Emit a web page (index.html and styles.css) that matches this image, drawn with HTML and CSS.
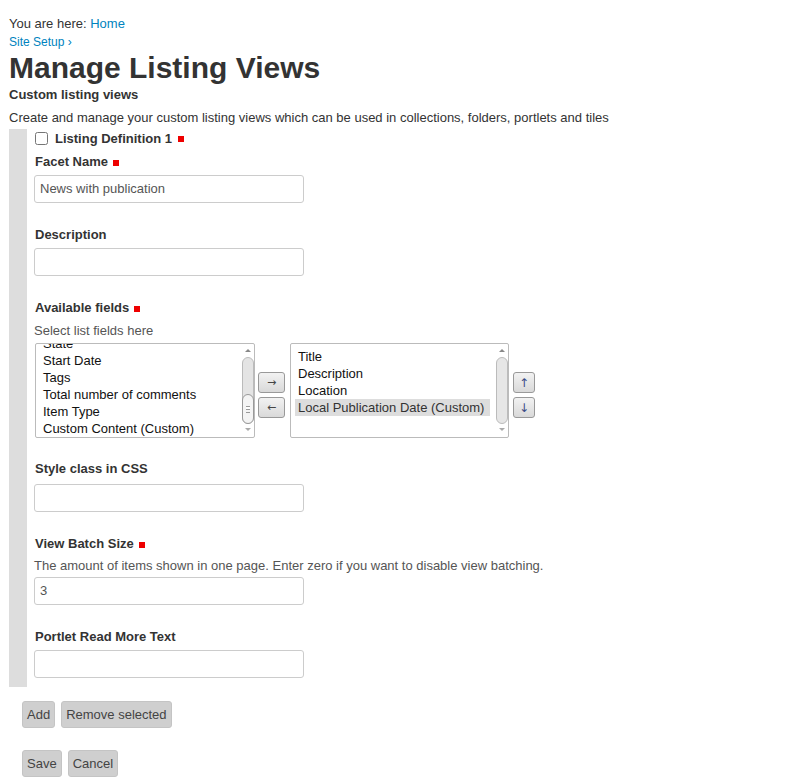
FILE: index.html
```html
<!DOCTYPE html>
<html>
<head>
<meta charset="utf-8">
<link rel="stylesheet" href="styles.css">
</head>
<body>
<div class="page">
  <div class="here">You are here: <a href="#">Home</a></div>
  <div class="crumbs"><a href="#">Site Setup ›</a></div>
  <h1>Manage Listing Views</h1>
  <h2>Custom listing views</h2>
  <p class="desc">Create and manage your custom listing views which can be used in collections, folders, portlets and tiles</p>

  <div class="fieldset">
    <div class="legend"><input type="checkbox" class="check"><span>Listing Definition 1</span><i class="req"></i></div>

    <div class="field f-first">
      <label class="lbl">Facet Name<i class="req"></i></label>
      <div class="input">News with publication</div>
    </div>

    <div class="field">
      <label class="lbl">Description</label>
      <div class="input"></div>
    </div>

    <div class="field">
      <label class="lbl">Available fields<i class="req"></i></label>
      <div class="help">Select list fields here</div>
      <div class="picker">
        <div class="list list-left">
          <div class="items shifted">
            <div class="item">State</div>
            <div class="item">Start Date</div>
            <div class="item">Tags</div>
            <div class="item">Total number of comments</div>
            <div class="item">Item Type</div>
            <div class="item">Custom Content (Custom)</div>
          </div>
          <div class="sb">
            <span class="sb-up"></span>
            <div class="sb-track"><div class="sb-thumb small"><span class="grip"></span></div></div>
            <span class="sb-down"></span>
          </div>
        </div>
        <div class="btncol">
          <span class="abtn wide">&#8594;</span>
          <span class="abtn wide">&#8592;</span>
        </div>
        <div class="list list-right">
          <div class="items">
            <div class="item">Title</div>
            <div class="item">Description</div>
            <div class="item">Location</div>
            <div class="item sel">Local Publication Date (Custom)</div>
          </div>
          <div class="sb">
            <span class="sb-up"></span>
            <div class="sb-track full"></div>
            <span class="sb-down"></span>
          </div>
        </div>
        <div class="btncol right">
          <span class="abtn blue">&#8593;</span>
          <span class="abtn blue">&#8595;</span>
        </div>
      </div>
    </div>

    <div class="field f-css">
      <label class="lbl">Style class in CSS</label>
      <div class="input"></div>
    </div>

    <div class="field f-batch">
      <label class="lbl">View Batch Size<i class="req"></i></label>
      <div class="help">The amount of items shown in one page. Enter zero if you want to disable view batching.</div>
      <div class="input tight">3</div>
    </div>

    <div class="field">
      <label class="lbl">Portlet Read More Text</label>
      <div class="input"></div>
    </div>
  </div>

  <div class="actions first">
    <button class="btn">Add</button>
    <button class="btn">Remove selected</button>
  </div>
  <div class="actions">
    <button class="btn">Save</button>
    <button class="btn">Cancel</button>
  </div>
</div>
</body>
</html>
```

FILE: styles.css
```css
* { box-sizing: border-box; }
html, body { margin: 0; padding: 0; background: #fff; }
body {
  font-family: "Liberation Sans", Arial, sans-serif;
  font-size: 13px;
  color: #333;
}
a { color: #0083be; text-decoration: none; }
.page { padding: 13px 9px 0 9px; }
.here { line-height: 21px; }
.crumbs { font-size: 12px; line-height: 17px; }
h1 {
  margin: 0;
  font-size: 30px;
  line-height: 34px;
  font-weight: bold;
  color: #333;
}
h2 {
  margin: 1px 0 0 0;
  font-size: 13px;
  line-height: 18px;
  font-weight: bold;
}
.desc { margin: 5px 0 0 0; line-height: 18px; }

.fieldset {
  margin-top: 2px;
  border-left: 18px solid #ddd;
  padding: 0 0 9px 7px;
}
.legend {
  display: flex;
  align-items: center;
  height: 18px;
  font-weight: bold;
}
.check {
  width: 13px;
  height: 13px;
  margin: 0 7px 0 1px;
}
.req {
  display: inline-block;
  width: 6px;
  height: 6px;
  background: #e00;
  margin-left: 5px;
  vertical-align: 0;
}
.legend .req { margin-left: 6px; margin-top: 2px; }

.field { margin-top: 22px; }
.field.f-first { margin-top: 5px; }
.field.f-css { margin-top: 21px; }
.lbl {
  display: block;
  font-weight: bold;
  line-height: 18px;
  padding: 1px 0 0 1px;
}
.help {
  margin-top: 5px;
  line-height: 18px;
  color: #555;
}
.f-batch .help { margin-top: 4px; }
.input {
  margin-top: 4px;
  width: 270px;
  height: 28px;
  border: 1px solid #ccc;
  border-radius: 3px;
  padding: 0 5px;
  line-height: 26px;
  color: #555;
  background: #fff;
}
.input.tight { margin-top: 2px; }
.f-css .input { margin-top: 6px; }

.picker {
  display: flex;
  align-items: flex-start;
  margin-top: 3px;
  margin-left: 1px;
}
.list {
  position: relative;
  height: 95px;
  border: 1px solid #bbb;
  border-radius: 2px;
  overflow: hidden;
  background: #fff;
  color: #111;
}
.list-left { width: 220px; }
.list-right { width: 219px; }
.items { padding: 4px 18px 0 4px; }
.items.shifted { margin-top: -13px; padding-left: 7px; }
.list-right .items { padding-left: 4px; }
.item { line-height: 17px; white-space: nowrap; padding-left: 3px; }
.list-left .item { padding-left: 0; }
.item.sel { background: #ddd; color: #333; }

.sb {
  position: absolute;
  top: 0;
  right: 0;
  width: 13px;
  height: 93px;
  display: flex;
  flex-direction: column;
  align-items: center;
}
.sb-up, .sb-down {
  width: 0; height: 0;
  border-left: 3px solid transparent;
  border-right: 3px solid transparent;
}
.sb-up { border-bottom: 3px solid #888; margin-top: 5px; }
.sb-down { border-top: 3px solid #aaa; margin-top: 4px; }
.sb-track {
  margin-top: 5px;
  width: 12px;
  height: 67px;
  border: 1px solid #bbb;
  border-radius: 6px;
  background: #e4e4e4;
  display: flex;
  flex-direction: column;
  justify-content: flex-end;
}
.sb-track.full { background: #e6e6e6; }
.sb-thumb.small {
  height: 30px;
  margin: 0 -1px -1px -1px;
  border: 1px solid #999;
  border-radius: 6px;
  background: #f4f4f4;
  display: flex;
  align-items: center;
  justify-content: center;
}
.grip {
  width: 4px;
  height: 7px;
  border-top: 1px solid #999;
  border-bottom: 1px solid #999;
  background: linear-gradient(#fff 0 2px, #999 2px 3px, #f4f4f4 3px);
}

.btncol {
  display: flex;
  flex-direction: column;
  gap: 4px;
  margin: 29px 5px 0 3px;
}
.btncol.right { margin-left: 4px; margin-right: 0; }
.abtn {
  width: 22px;
  height: 21px;
  border: 1px solid #999;
  border-radius: 3px;
  background: linear-gradient(#f2f2f2, #d9d9d9);
  display: flex;
  align-items: center;
  justify-content: center;
  font-size: 13px;
  color: #444;
  font-family: "DejaVu Sans", sans-serif;
}
.abtn.wide { width: 27px; font-size: 11px; }
.abtn.blue { color: #3a4a85; font-size: 12px; }

.actions {
  display: flex;
  gap: 6px;
  margin-left: 13px;
  margin-top: 14px;
}
.actions + .actions { margin-top: 22px; }
.btn {
  font-family: "Liberation Sans", Arial, sans-serif;
  font-size: 13px;
  color: #444;
  height: 27px;
  padding: 0 4px;
  border: 1px solid #c4c4c4;
  border-radius: 3px;
  background: #cfcfcf;
  line-height: 25px;
}
```
